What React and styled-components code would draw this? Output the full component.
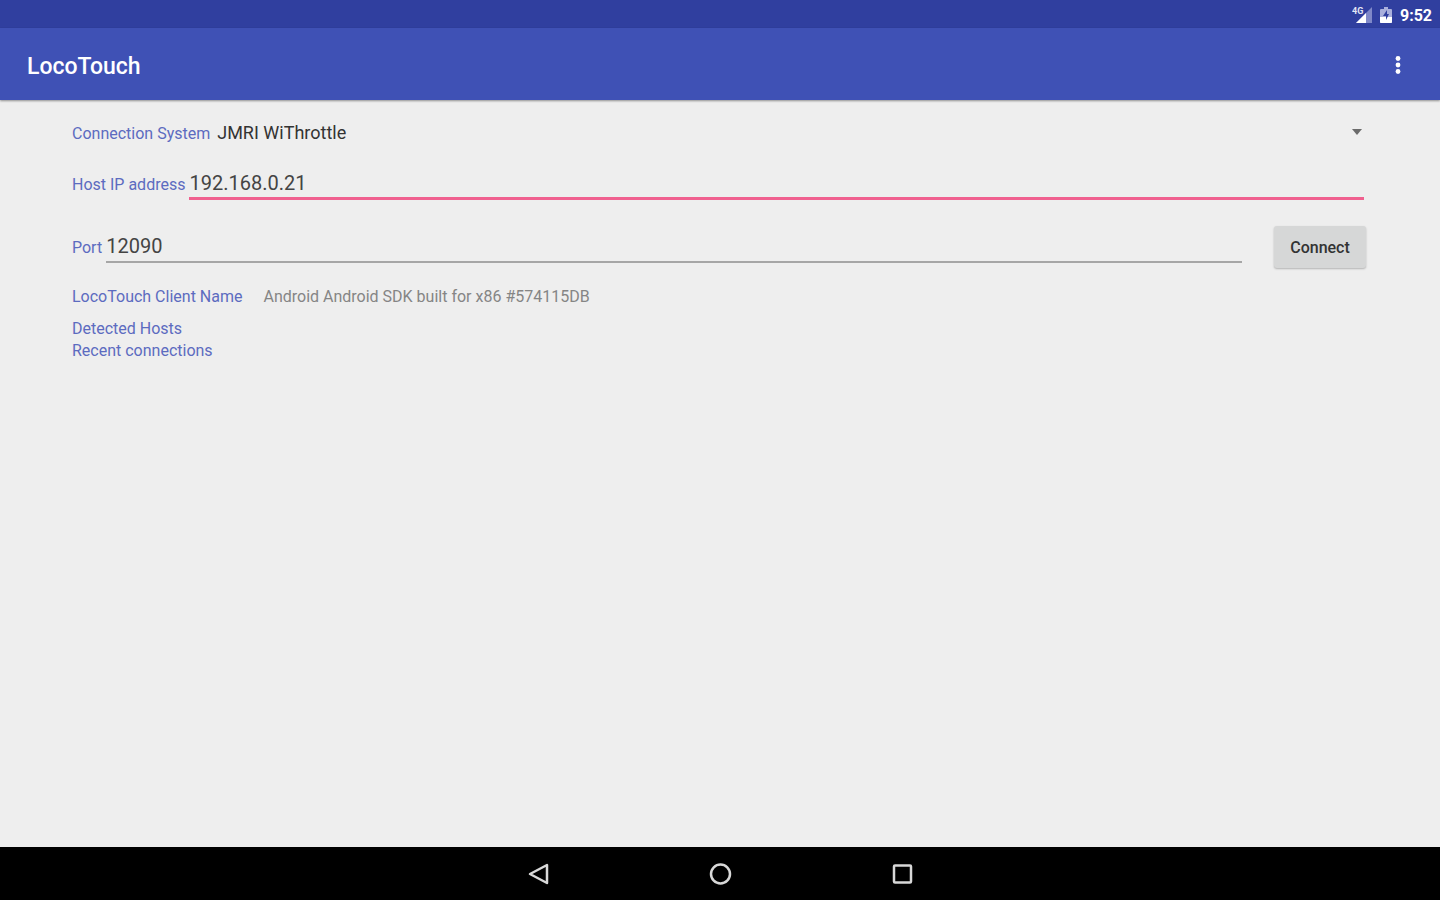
import React, { useState } from 'react';
import styled, { createGlobalStyle } from 'styled-components';

const GlobalStyle = createGlobalStyle`
    * {
        box-sizing: border-box;
    }
    body {
        margin: 0;
        font-family: Roboto, 'Liberation Sans', sans-serif;
        background-color: #eeeeee;
    }
`;

const App = () => {
    const [system, setSystem] = useState('withrottle');
    const [host, setHost] = useState('192.168.0.21');
    const [port, setPort] = useState('12090');

    return (
        <Screen>
            <GlobalStyle />
            <StatusBar>
                <svg width="20" height="18" viewBox="0 0 20 18">
                    <path d="M20 1V17H4Z" fill="#7f88c8" />
                    <path d="M14 7V17H4Z" fill="#fff" />
                    <text
                        x="0"
                        y="8"
                        fontSize="9"
                        fontWeight="700"
                        fill="#e4e6f5"
                        stroke="#303f9f"
                        strokeWidth="1"
                        paintOrder="stroke"
                    >
                        4G
                    </text>
                </svg>
                <svg width="12" height="16" viewBox="0 0 12 16">
                    <path
                        d="M4 0H8V2H11Q12 2 12 3V15Q12 16 11 16H1Q0 16 0 15V3Q0 2 1 2H4Z"
                        fill="#a9afdc"
                    />
                    <path d="M0 10H12V15Q12 16 11 16H1Q0 16 0 15Z" fill="#fff" />
                    <path d="M7 3L3 9H6V13L9 7H7Z" fill="#303f9f" />
                </svg>
                <Clock>9:52</Clock>
            </StatusBar>
            <AppBar>
                <Title>LocoTouch</Title>
                <MenuButton type="button" aria-label="More options">
                    <svg width="6" height="18" viewBox="0 0 6 18" fill="#fff">
                        <circle cx="3" cy="2.5" r="2.4" />
                        <circle cx="3" cy="9" r="2.4" />
                        <circle cx="3" cy="15.5" r="2.4" />
                    </svg>
                </MenuButton>
            </AppBar>

            <Form onSubmit={(e) => e.preventDefault()}>
                <SystemRow>
                    <Label htmlFor="system">Connection System</Label>
                    <SelectBox>
                        <Select
                            id="system"
                            value={system}
                            onChange={(e) => setSystem(e.target.value)}
                        >
                            <option value="withrottle">JMRI WiThrottle</option>
                        </Select>
                        <Arrow width="10" height="6" viewBox="0 0 10 6">
                            <path d="M0 0H10L5 6Z" fill="#6b6b6b" />
                        </Arrow>
                    </SelectBox>
                </SystemRow>
                <HostRow>
                    <Label htmlFor="host">Host IP address</Label>
                    <Input
                        id="host"
                        type="text"
                        $active
                        value={host}
                        onChange={(e) => setHost(e.target.value)}
                    />
                </HostRow>
                <PortRow>
                    <Field>
                        <Label htmlFor="port">Port</Label>
                        <Input
                            id="port"
                            type="text"
                            value={port}
                            onChange={(e) => setPort(e.target.value)}
                        />
                    </Field>
                    <ConnectButton type="submit">Connect</ConnectButton>
                </PortRow>
                <ClientRow>
                    <Caption>LocoTouch Client Name</Caption>
                    <ClientName>
                        Android Android SDK built for x86 #574115DB
                    </ClientName>
                </ClientRow>
                <Caption>Detected Hosts</Caption>
                <Caption>Recent connections</Caption>
            </Form>

            <NavBar>
                <NavButton type="button" aria-label="Back">
                    <svg width="24" height="24" viewBox="0 0 24 24">
                        <path d="M21 3V21L4 12Z" />
                    </svg>
                </NavButton>
                <NavButton type="button" aria-label="Home">
                    <svg width="24" height="24" viewBox="0 0 24 24">
                        <circle cx="12.5" cy="12" r="9.5" />
                    </svg>
                </NavButton>
                <NavButton type="button" aria-label="Overview">
                    <svg width="24" height="24" viewBox="0 0 24 24">
                        <rect x="4" y="3.5" width="17" height="17" rx="1" />
                    </svg>
                </NavButton>
            </NavBar>
        </Screen>
    );
};

const Screen = styled.div`
    min-height: 100vh;
    display: flex;
    flex-direction: column;
`;
const StatusBar = styled.div`
    height: 28px;
    padding: 2px 8px 0;
    display: flex;
    justify-content: flex-end;
    align-items: center;
    gap: 8px;
    color: #fff;
    background-color: #303f9f;
`;
const Clock = styled.span`
    font-size: 16px;
    font-weight: 700;
`;
const AppBar = styled.header`
    height: 72px;
    padding: 2px 27px 0;
    display: flex;
    justify-content: space-between;
    align-items: center;
    color: #fff;
    background-color: #3f51b5;
    box-shadow: 0 1px 2px rgba(0, 0, 0, 0.4);
`;
const Title = styled.h1`
    margin: 0;
    padding-top: 2px;
    font-size: 23px;
    font-weight: 500;
`;
const MenuButton = styled.button`
    width: 30px;
    height: 40px;
    padding: 0;
    display: flex;
    justify-content: center;
    align-items: center;
    border: 0;
    background: none;
    cursor: pointer;
`;
const Form = styled.form`
    padding: 11px 74px 0 72px;
    display: flex;
    flex-direction: column;
    flex-grow: 1;
`;
const Field = styled.div`
    display: flex;
    flex-grow: 1;
    align-items: baseline;
    gap: 4px;
`;
const SystemRow = styled(Field)`
    flex-grow: 0;
    gap: 7px;
`;
const HostRow = styled(Field)`
    flex-grow: 0;
    padding: 15px 2px 0 0;
`;
const PortRow = styled.div`
    padding-top: 26px;
    display: flex;
    align-items: center;
    gap: 32px;
`;
const ClientRow = styled.div`
    padding: 18px 0 10px;
    display: flex;
    gap: 21px;
`;
const Label = styled.label`
    font-size: 16px;
    line-height: 22px;
    color: #5c6bc0;
`;
const Caption = styled.span`
    font-size: 16px;
    line-height: 22px;
    color: #5c6bc0;
`;
const ClientName = styled.span`
    font-size: 16px;
    line-height: 22px;
    color: #858585;
`;
const SelectBox = styled.div`
    position: relative;
    flex-grow: 1;
`;
const Select = styled.select`
    width: 100%;
    height: 42px;
    padding: 0;
    border: 0;
    font-family: inherit;
    font-size: 18px;
    color: #333;
    background: none;
    appearance: none;
    outline: none;
`;
const Arrow = styled.svg`
    position: absolute;
    top: 18px;
    right: 4px;
    pointer-events: none;
`;
const Input = styled.input`
    box-sizing: content-box;
    height: 29px;
    min-width: 0;
    padding: 0;
    flex-grow: 1;
    border: 0;
    border-bottom: ${(props) =>
        props.$active ? '3px solid #f0608f' : '2px solid #a6a6a6'};
    font-family: inherit;
    font-size: 20px;
    color: #444;
    background: none;
    outline: none;
`;
const ConnectButton = styled.button`
    width: 92px;
    height: 42px;
    padding: 0;
    border: 0;
    border-radius: 3px;
    font-family: inherit;
    font-size: 16px;
    font-weight: 500;
    color: #333;
    background-color: #d6d7d7;
    box-shadow: 0 1px 2px rgba(0, 0, 0, 0.25);
    cursor: pointer;
`;
const NavBar = styled.nav`
    height: 53px;
    display: flex;
    justify-content: center;
    align-items: center;
    gap: 134px;
    background-color: #000;
`;
const NavButton = styled.button`
    width: 48px;
    height: 48px;
    padding: 0;
    display: flex;
    justify-content: center;
    align-items: center;
    border: 0;
    background: none;
    cursor: pointer;

    svg {
        fill: none;
        stroke: #d8d8d8;
        stroke-width: 2.5;
        stroke-linejoin: round;
    }
`;

export default App;
